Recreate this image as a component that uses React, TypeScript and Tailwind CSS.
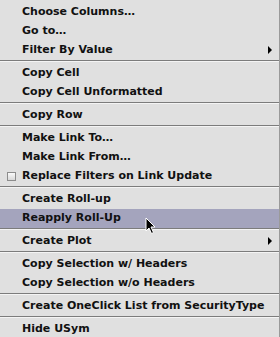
import React from "react";

type Item = { label: string; sub?: boolean; check?: boolean; active?: boolean };

const groups: Item[][] = [
  [{ label: "Choose Columns…" }, { label: "Go to…" }, { label: "Filter By Value", sub: true }],
  [{ label: "Copy Cell" }, { label: "Copy Cell Unformatted" }],
  [{ label: "Copy Row" }],
  [{ label: "Make Link To…" }, { label: "Make Link From…" }, { label: "Replace Filters on Link Update", check: true }],
  [{ label: "Create Roll-up" }, { label: "Reapply Roll-Up", active: true }],
  [{ label: "Create Plot", sub: true }],
  [{ label: "Copy Selection w/ Headers" }, { label: "Copy Selection w/o Headers" }],
  [{ label: "Create OneClick List from SecurityType" }],
  [{ label: "Hide USym" }],
];

const Row = ({ item }: { item: Item }) => (
  <div
    className={`relative flex items-center h-[19px] pl-[22px] pr-2 ${
      item.active ? "bg-[#a4a4bd]" : ""
    }`}
  >
    {item.check && (
      <span className="absolute left-[7px] top-[5px] w-[9px] h-[9px] border border-[#8c8c8c] bg-gradient-to-b from-[#fafafa] to-[#d8d8d8]" />
    )}
    <span className="whitespace-nowrap">{item.label}</span>
    {item.sub && (
      <span className="absolute right-[7px] top-[5px] w-0 h-0 border-y-[4px] border-y-transparent border-l-[4px] border-l-black" />
    )}
  </div>
);

const Separator = () => (
  <div className="h-[4px]">
    <div className="h-px bg-[#7c7c7c]" />
    <div className="h-px bg-[#f4f4f4]" />
  </div>
);

export default function App() {
  return (
    <div className="relative w-[280px] h-[337px] overflow-hidden bg-[#e0e0e0] border-r border-[#9a9a9a] pt-[3px] text-[11px] font-bold text-[#111] font-['DejaVu_Sans',sans-serif]">
      {groups.map((g, gi) => (
        <div key={gi}>
          {gi > 0 && <Separator />}
          {g.map(item => (
            <Row key={item.label} item={item} />
          ))}
        </div>
      ))}

      {/* mouse pointer */}
      <svg className="absolute left-[145px] top-[217px]" width="12" height="18" viewBox="0 0 12 18">
        <path d="M1 1 L1 14 L4 11 L6.5 16.5 L8.5 15.5 L6 10 L10 10 Z" fill="#000" stroke="#fff" strokeWidth="1" strokeLinejoin="round" />
      </svg>
    </div>
  );
}
